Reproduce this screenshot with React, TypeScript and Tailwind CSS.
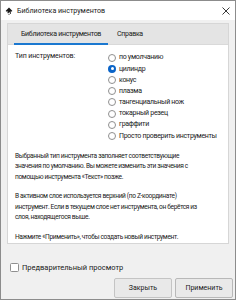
import React from "react";

const font = { fontFamily: 'Roboto, "Noto Sans", sans-serif' };

function Radio({ checked }: { checked?: boolean }) {
  if (checked) {
    return (
      <span className="w-[8px] h-[8px] rounded-full bg-[#0a64c8] flex items-center justify-center shrink-0">
        <span className="w-[3px] h-[3px] rounded-full bg-white" />
      </span>
    );
  }
  return <span className="w-[8px] h-[8px] rounded-full border border-[#8f8f8f] bg-white shrink-0" />;
}

const options = [
  "по умолчанию",
  "цилиндр",
  "конус",
  "плазма",
  "тангенциальный нож",
  "токарный резец",
  "граффити",
  "Просто проверить инструменты",
];

export default function App() {
  return (
    <div
      className="w-[236px] h-[300px] border border-[#8c8c8c] bg-[#f0f0f0] flex flex-col overflow-hidden text-[#1a1a1a]"
      style={font}
    >
      <div className="h-[19px] bg-white flex items-center shrink-0">
        <svg width="8" height="8" viewBox="0 0 16 16" className="ml-[4px]">
          <path d="M8 1 L14 7 C15 8 14 9 13 9 L11 9 L12 13 C12 14 10 14 10 13 L9 10 L7 12 C6 13 4 12 5 11 L6 9 L3 9 C2 9 1 8 2 7 Z" fill="#1b1b1b" />
          <circle cx="8" cy="14.5" r="1.2" fill="#1b1b1b" />
        </svg>
        <span className="ml-[4px] text-[7.1px] leading-none">Библиотека инструментов</span>
        <svg width="8" height="8" viewBox="0 0 8 8" className="ml-auto mr-[5px]">
          <path d="M0.5 0.5 L7.5 7.5 M7.5 0.5 L0.5 7.5" stroke="#222" strokeWidth="0.9" />
        </svg>
      </div>
      <div className="px-[6px] pt-[3px]">
        <div className="border border-[#d6d6d6]">
          <div className="h-[21px] bg-[#e4e4e4] flex items-stretch border-b border-[#d9d9d9]">
            <div className="ml-[6px] px-[7px] flex items-center relative text-[7px] tracking-[-0.3px]">
              Библиотека инструментов
              <span className="absolute left-0 right-0 bottom-[-1px] h-[2px] bg-[#1b78d0]" />
            </div>
            <div className="ml-[2px] px-[7px] flex items-center text-[7px] tracking-[-0.3px]">Справка</div>
          </div>
          <div className="bg-white h-[198px] px-[7px] pt-[7px] text-[7px] tracking-[-0.3px]">
            <div className="grid grid-cols-[93px_1fr]">
              <div className="leading-[9px] tracking-[-0.1px]">Тип инструментов:</div>
              <div className="flex flex-col">
                {options.map((o, i) => (
                  <div key={o} className="h-[11.2px] flex items-center gap-[3px]">
                    <Radio checked={i === 1} />
                    <span className="whitespace-nowrap">{o}</span>
                  </div>
                ))}
              </div>
            </div>
            <div className="mt-[9px] leading-[10.5px] flex flex-col gap-[9px] whitespace-nowrap text-[6.6px] tracking-[-0.35px]">
              <p>
                Выбранный тип инструмента заполняет соответствующие
                <br />
                значения по умолчанию. Вы можете изменить эти значения с
                <br />
                помощью инструмента «Текст» позже.
              </p>
              <p>
                В активном слое используется верхний (по Z-координате)
                <br />
                инструмент. Если в текущем слое нет инструмента, он берётся из
                <br />
                слоя, находящегося выше.
              </p>
              <p>Нажмите «Применить», чтобы создать новый инструмент.</p>
            </div>
          </div>
        </div>
      </div>
      <div className="mt-[19px] ml-[9px] flex items-center gap-[3px] text-[7.5px] leading-[9px]">
        <span className="w-[9px] h-[9px] border border-[#8f8f8f] rounded-[1.5px] bg-white" />
        <span>Предварительный просмотр</span>
      </div>
      <div className="mt-[6px] flex justify-end gap-[3px] pr-[2px]">
        <div className="w-[58px] h-[20px] border border-[#c4c4c4] bg-[#e9e9e9] rounded-[2px] flex items-center justify-center text-[7px]">
          Закрыть
        </div>
        <div className="w-[58px] h-[20px] border border-[#b8b8b8] bg-[#e9e9e9] rounded-[2px] flex items-center justify-center text-[7px]">
          Применить
        </div>
      </div>
    </div>
  );
}
